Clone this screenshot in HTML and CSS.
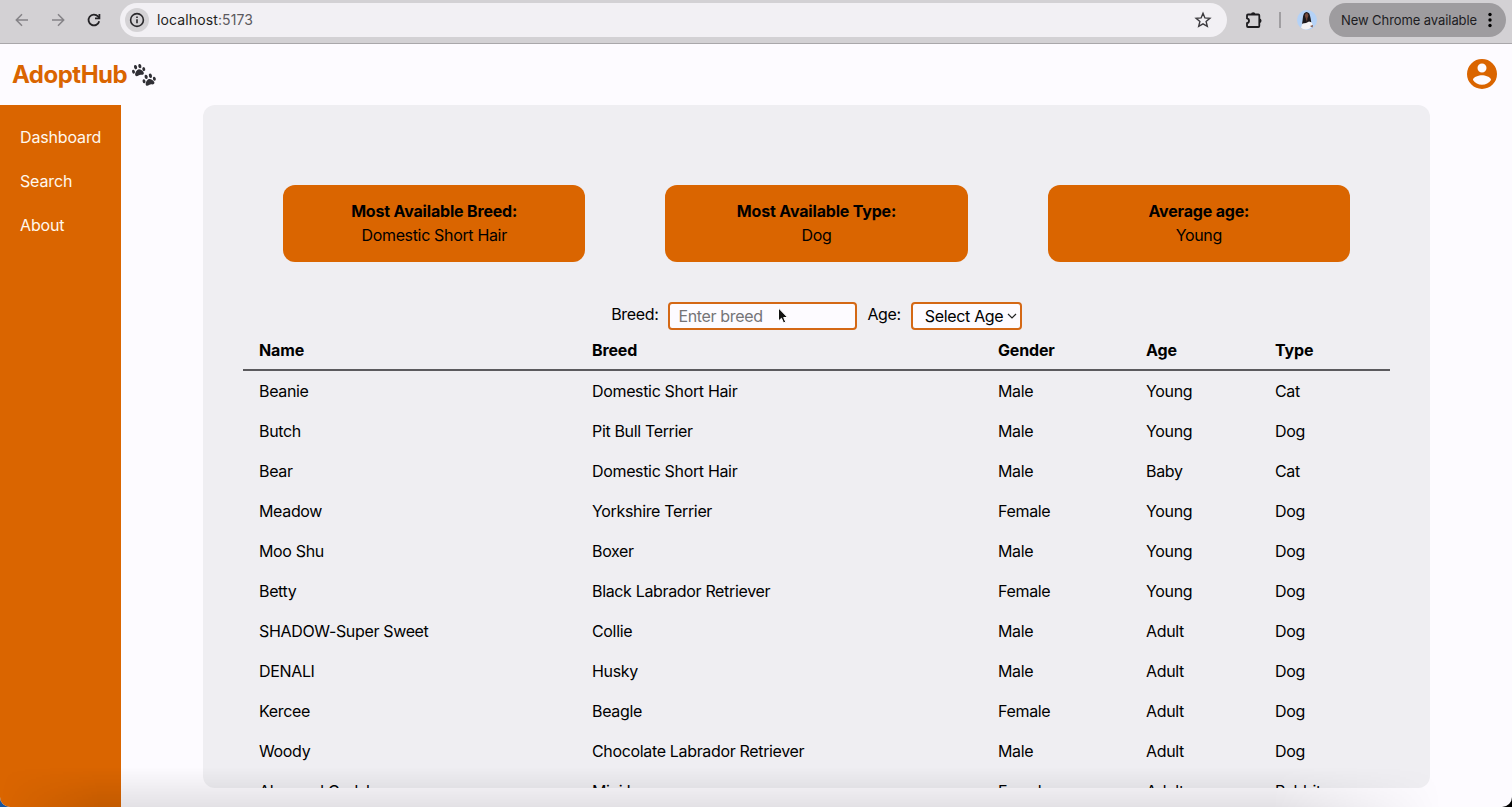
FILE: index.html
```html
<!DOCTYPE html>
<html lang="en">
<head>
<meta charset="utf-8">
<title>AdoptHub</title>
<link rel="stylesheet" href="styles.css">
</head>
<body>
<div class="window">
  <div class="toolbar">
    <svg class="nav-icon dim" viewBox="0 0 16 16"><path d="M14 8H2.5M8 2.3 2.3 8 8 13.7"/></svg>
    <svg class="nav-icon dim" viewBox="0 0 16 16"><path d="M2 8h11.500M8 2.300 13.700 8 8 13.700"/></svg>
    <svg class="nav-icon reload" viewBox="0 0 16 16"><path d="M13.200 9.200A5.400 5.400 0 1 1 12 4.400L13.300 5.700"/><path d="M13.400 2v4.300H9"/></svg>
    <div class="omnibox">
      <span class="site-info"><svg viewBox="0 0 16 16"><circle cx="8" cy="8" r="6.400"/><path d="M8 7.300v4M8 4.500v1.600"/></svg></span>
      <span class="url">localhost<span class="port">:5173</span></span>
      <svg class="star" viewBox="0 0 18 18"><path d="m9 2.300 1.900 4.600 5 .4-3.800 3.200 1.200 4.900L9 12.800l-4.300 2.600 1.200-4.900-3.800-3.200 5-.4z"/></svg>
    </div>
    <svg class="puzzle" viewBox="0 0 18 18"><path d="M3 3.500h10.300q1 0 1 1v10.500q0 1-1 1H3q-1 0-1-1v-2.800a2.500 2.500 0 0 0 0-4.900V4.500q0-1 1-1z"/><path class="solid" d="M6 3.500a2.200 2.200 0 0 1 4.400 0zM14.300 7.500a2.200 2.200 0 0 1 0 4.500z"/></svg>
    <span class="divider"></span>
    <svg class="profile" viewBox="0 0 20 20"><circle cx="10" cy="10" r="10" fill="#b4d2f7"/><path d="M7 3.500Q9.500 .5 12.300 3.500C13.500 7 14 10 14.500 14H5C6 10 5.500 6 7 3.500z" fill="#1c191d"/><ellipse cx="9.600" cy="5.600" rx="1.700" ry="2.500" fill="#75483b"/><path d="M8.500 7.500h2l-.5 4.500z" fill="#75483b"/><path d="M4 17.500 5.500 13.500 9 13 12 11.500 15 12.500 15.500 16Q12 20.500 6 19z" fill="#f5f3f5"/><path d="m13 16 3-1-.5 2.500z" fill="#7b5145"/></svg>
    <div class="update">New Chrome available<svg viewBox="0 0 4 16"><circle cx="2" cy="2.500" r="1.700"/><circle cx="2" cy="8" r="1.700"/><circle cx="2" cy="13.500" r="1.700"/></svg></div>
  </div>
  <header class="header">
    <div class="brand">AdoptHub
      <svg class="paws" viewBox="0 0 26 26">
        <g id="paw" transform="rotate(-14 8 8)"><path d="M8 6.600c2 0 4.300 2.600 4.600 4.400.3 2.300-1.800 2.300-3.200 1.700-1-.3-1.800-.3-2.800 0-1.400.6-3.500.6-3.200-1.700C3.700 9.200 6 6.600 8 6.600z"/><ellipse cx="2.500" cy="7.700" rx="1.500" ry="2.100"/><ellipse cx="5.700" cy="3.700" rx="1.600" ry="2.300"/><ellipse cx="10.300" cy="3.700" rx="1.600" ry="2.300"/><ellipse cx="13.500" cy="7.700" rx="1.500" ry="2.100"/></g>
        <use href="#paw" x="11" y="10"/>
      </svg>
    </div>
    <svg class="account" viewBox="2 2 20 20"><path d="M12 2a10 10 0 1 0 0 20 10 10 0 0 0 0-20zm0 3a3 3 0 1 1 0 6 3 3 0 0 1 0-6zm0 14.200a7.200 7.200 0 0 1-6-3.220c.03-1.990 4-3.080 6-3.080s5.970 1.090 6 3.080a7.200 7.200 0 0 1-6 3.220z"/></svg>
  </header>
  <div class="layout">
    <nav class="sidebar"><a>Dashboard</a><a>Search</a><a>About</a></nav>
    <main class="main">
      <section class="panel">
        <div class="cards">
          <div class="card"><b>Most Available Breed:</b><span>Domestic Short Hair</span></div>
          <div class="card"><b>Most Available Type:</b><span>Dog</span></div>
          <div class="card"><b>Average age:</b><span>Young</span></div>
        </div>
        <div class="filters">
          <label>Breed:</label><div class="field breed-field">Enter breed</div>
          <label>Age:</label><div class="field age-field">Select Age<svg viewBox="0 0 10 6"><path d="m1 1 4 4 4-4"/></svg></div>
        </div>
        <div class="table">
          <div class="row head"><span>Name</span><span>Breed</span><span>Gender</span><span>Age</span><span>Type</span></div>
          <div class="row"><span>Beanie</span><span>Domestic Short Hair</span><span>Male</span><span>Young</span><span>Cat</span></div>
          <div class="row"><span>Butch</span><span>Pit Bull Terrier</span><span>Male</span><span>Young</span><span>Dog</span></div>
          <div class="row"><span>Bear</span><span>Domestic Short Hair</span><span>Male</span><span>Baby</span><span>Cat</span></div>
          <div class="row"><span>Meadow</span><span>Yorkshire Terrier</span><span>Female</span><span>Young</span><span>Dog</span></div>
          <div class="row"><span>Moo Shu</span><span>Boxer</span><span>Male</span><span>Young</span><span>Dog</span></div>
          <div class="row"><span>Betty</span><span>Black Labrador Retriever</span><span>Female</span><span>Young</span><span>Dog</span></div>
          <div class="row"><span>SHADOW-Super Sweet</span><span>Collie</span><span>Male</span><span>Adult</span><span>Dog</span></div>
          <div class="row"><span>DENALI</span><span>Husky</span><span>Male</span><span>Adult</span><span>Dog</span></div>
          <div class="row"><span>Kercee</span><span>Beagle</span><span>Female</span><span>Adult</span><span>Dog</span></div>
          <div class="row"><span>Woody</span><span>Chocolate Labrador Retriever</span><span>Male</span><span>Adult</span><span>Dog</span></div>
          <div class="row"><span>Almoned Codsha</span><span>Mini Lop</span><span>Female</span><span>Adult</span><span>Rabbit</span></div>
        </div>
      </section>
    </main>
  </div>
  <div class="shade"></div>
  <svg class="cursor" viewBox="0 0 12 18"><path d="M1.500 1v13l3-2.700 2 4.700 2.200-1-2-4.500h4z"/></svg>
</div>
</body>
</html>
```
FILE: styles.css
```css
* { box-sizing: border-box; }
body { margin: 0; height: 807px; overflow: hidden; background: linear-gradient(90deg, #17549c 50%, #000 50%); font: 16px/24px Inter, sans-serif; letter-spacing: -0.34px; color: #000; }
.window { position: relative; height: 807px; display: flex; flex-direction: column; overflow: hidden; border-radius: 0 0 10px 10px; background: #fdfbff; }
.toolbar { flex: none; height: 44px; padding: 0 6px 4px 14px; display: flex; align-items: center; letter-spacing: 0; background: #d3d1d4; border-bottom: 1px solid #a9a7aa; }
.nav-icon { width: 16px; height: 16px; margin-right: 20px; fill: none; stroke: #242326; stroke-width: 1.8; }
.nav-icon.dim { stroke: #858387; stroke-width: 1.5; }
.nav-icon.reload { margin-right: 18px; }
.omnibox { width: 1107px; height: 34px; padding: 0 15px 0 5px; display: flex; align-items: center; border-radius: 17px; background: #f2f0f4; }
.site-info { width: 24px; height: 24px; display: grid; place-items: center; border-radius: 50%; background: #d4d2d5; }
.site-info svg { width: 16px; fill: none; stroke: #29282b; stroke-width: 1.6; }
.url { margin-left: 8px; flex: 1; font-size: 14px; letter-spacing: .12px; color: #1f1e21; }
.port { color: #5c5a5e; }
.star { width: 18px; fill: none; stroke: #3c3a3e; stroke-width: 1.4; }
.puzzle { width: 18px; height: 18px; margin-left: 18px; fill: none; stroke: #1c1b1e; stroke-width: 1.8; overflow: visible; }
.puzzle .solid { fill: #1c1b1e; stroke: none; }
.divider { width: 2px; height: 16px; margin: 0 16px 0 16px; background: #a09ea1; }
.profile { width: 20px; height: 20px; }
.update { width: 177px; height: 34px; margin-left: auto; padding: 0 14px 0 12px; display: flex; align-items: center; justify-content: space-between; border-radius: 17px; background: #9e9c9f; font-size: 13px; letter-spacing: -0.08px; white-space: nowrap; color: #1d1c1f; }
.update svg { width: 4px; height: 16px; }
.header { flex: none; height: 61px; padding: 0 15px 2px 12px; display: flex; align-items: center; justify-content: space-between; }
.brand { display: flex; gap: 4px; align-items: center; padding-top: 3px; font-size: 24px; font-weight: 650; letter-spacing: -0.5px; color: #da6500; }
.paws { width: 25px; height: 25px; fill: #302f35; overflow: visible; }
.account { width: 30px; height: 30px; fill: #da6500; }
.layout { flex: 1; min-height: 0; display: flex; }
.sidebar { width: 121px; padding: 20px; display: flex; flex-direction: column; gap: 20px; letter-spacing: -0.15px; background: #da6500; color: #fff8ee; }
.main { flex: 1; padding: 0 82px 19px; display: flex; }
.panel { flex: 1; height: 683px; padding: 80px 40px 0; overflow: hidden; border-radius: 12px; background: #efeef2; }
.cards { margin: 0 40px; display: grid; grid-template-columns: repeat(3, 1fr); gap: 80px; }
.card { height: 76.500px; padding-top: 14px; border-radius: 12px; background: #da6500; display: flex; flex-direction: column; align-items: center; }
.card b { letter-spacing: -0.18px; font-weight: 700; }
.filters { margin-top: 40px; height: 28px; display: flex; justify-content: center; align-items: center; }
.filters label { position: relative; top: -2px; }
.field { height: 28px; border: 2px solid #d46815; border-radius: 4px; background: #fdfbff; display: flex; align-items: center; }
.breed-field { width: 189px; margin: 0 10px; padding-left: 8px; color: #757477; }
.age-field { width: 111px; margin-left: 10px; padding: 0 3px 0 12px; justify-content: space-between; }
.age-field svg { width: 10px; fill: none; stroke: #222; stroke-width: 1.2; }
.row { height: 40px; padding-left: 16px; display: grid; grid-template-columns: 333px 406px 148px 129px 1fr; align-items: center; white-space: nowrap; }
.row.head { height: 41px; padding-top: 1px; border-bottom: 2px solid #5b5a5e; font-weight: 700; letter-spacing: -0.15px; }
.shade { position: absolute; left: 0; right: 70px; bottom: 0; height: 40px; pointer-events: none; background: linear-gradient(transparent, rgba(0, 0, 0, .1)); -webkit-mask-image: linear-gradient(90deg, transparent, #000 100px calc(100% - 170px), transparent); mask-image: linear-gradient(90deg, transparent, #000 100px calc(100% - 170px), transparent); }
.cursor { position: absolute; left: 777px; top: 307px; width: 12px; height: 18px; fill: #111; stroke: #fff; stroke-width: 1; }
```
